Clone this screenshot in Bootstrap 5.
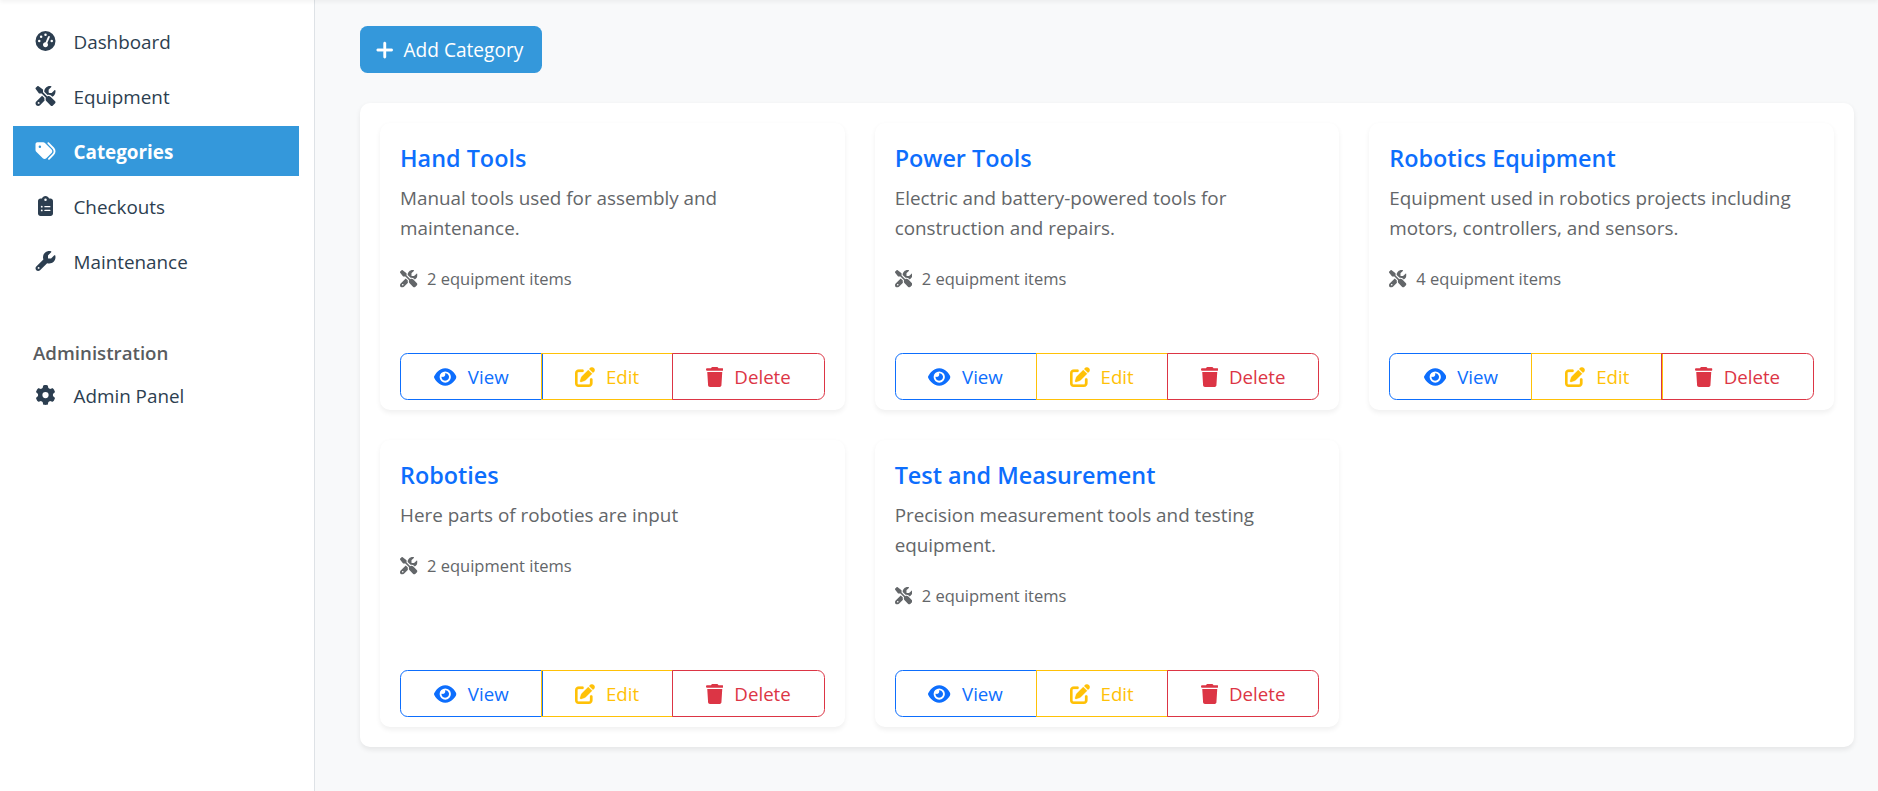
<!DOCTYPE html>
<html lang="en">
<head>
<meta charset="utf-8">
<meta name="viewport" content="width=device-width, initial-scale=1">
<title>Categories</title>
<link href="https://cdn.jsdelivr.net/npm/bootstrap@5.3.0/dist/css/bootstrap.min.css" rel="stylesheet">
<style>
  html { font-size: 20px; }
  body { font-family: "Open Sans", "Noto Sans", sans-serif; font-size: 18.85px; line-height: 30px; background: #f8f9fa; }
  .topline { position: fixed; inset: -10px 0 auto 0; height: 10px; box-shadow: 0 2px 4px rgba(0,0,0,.05); z-index: 5; }
  .ico { height: 20px; fill: currentColor; flex: none; }
  .side { width: 315px; min-height: 791px; border-right: 1px solid #dee2e6; padding: 16px 15px 0 13px; flex: none; }
  .side .nav-link { display: flex; align-items: center; height: 50px; padding: 1px 20px 0; margin-bottom: 5px; color: #2c3e50; }
  .side .nav-link .ico { width: 25px; margin: -1px 15.5px 0 0; }
  .side .nav-link.active { background: #3498db; color: #fff; font-weight: 700; }
  .side-head { margin: 47px 0 2px 20px; font-size: 18.7px; line-height: 30px; font-weight: 600; color: #595c5f; }
  .page { padding: 26px 24px 0 45px; }
  .btn { height: 47px; font-size: 18.7px; line-height: 30px; padding: 0 15px; border-radius: 7.5px; }
  .btn-add { width: 182px; background: #3498db; color: #fff; font-size: 19.1px; white-space: nowrap; }
  .btn-add .ico { margin-right: 10px; }
  .panel { margin-top: 30px; padding: 20px; border-radius: 10px; border: 0; box-shadow: 0 2.5px 5px rgba(0,0,0,.075); }
  .grid-row { --bs-gutter-x: 30px; --bs-gutter-y: 30px; }
  .cat { height: 287px; border: 0; border-radius: 10px; box-shadow: 0 2.5px 5px rgba(0,0,0,.06); }
  .cat .card-body { padding: 20px 20px 0; }
  .cat .card-title { font-size: 23.4px; line-height: 30px; font-weight: 600; margin-bottom: 10px; color: #0d6efd; }
  .cat .card-text { color: #636669; margin-bottom: 21px; }
  .cat .count { color: #636669; font-size: 16.5px; }
  .cat .count .ico { height: 17.5px; margin-right: 9.5px; }
  .acts { margin: 0 20px 10px; }
  .acts .btn { flex: 0 0 auto; display: flex; align-items: center; justify-content: center; background: transparent; padding: 0; }
  .acts .ico { margin-right: 11px; }
  .b-view { width: 142px; }
  .b-edit { width: 132px; }
  .b-del { flex: 1 1 0 !important; }
  .grid-row > :nth-child(3n+1) .b-view, .grid-row > :nth-child(3n) .b-view { width: 143px; }
  .grid-row > :nth-child(3n+1) .b-edit { margin-left: -2px !important; }
  .grid-row > :nth-child(3n) .b-del { margin-left: -2px !important; }
</style>
</head>
<body>
<svg class="d-none" xmlns="http://www.w3.org/2000/svg">
  <symbol id="gauge" viewBox="0 0 512 512"><path d="M0 256a256 256 0 1 1 512 0A256 256 0 1 1 0 256zM288 96a32 32 0 1 0 -64 0 32 32 0 1 0 64 0zM256 416c35.3 0 64-28.7 64-64c0-17.4-6.9-33.1-18.1-44.6L366 161.7c5.3-12.1-.2-26.3-12.3-31.6s-26.3 .2-31.6 12.3L257.9 288c-.6 0-1.3 0-1.9 0c-35.3 0-64 28.7-64 64s28.7 64 64 64zM176 144a32 32 0 1 0 -64 0 32 32 0 1 0 64 0zM96 288a32 32 0 1 0 0-64 32 32 0 1 0 0 64zm352-32a32 32 0 1 0 -64 0 32 32 0 1 0 64 0z"/></symbol>
  <symbol id="tools" viewBox="0 0 512 512"><path d="M78.6 5C69.1-2.4 55.6-1.5 47 7L7 47c-8.5 8.5-9.4 22-2.1 31.6l80 104c4.5 5.9 11.6 9.4 19 9.4h54.1l109 109c-14.7 29-10 65.4 14.3 89.6l112 112c12.5 12.5 32.8 12.5 45.3 0l64-64c12.5-12.5 12.5-32.8 0-45.3l-112-112c-24.2-24.2-60.6-29-89.6-14.3l-109-109V104c0-7.5-3.5-14.5-9.4-19L78.6 5zM19.9 396.1C7.2 408.8 0 426.1 0 444.1C0 481.6 30.4 512 67.9 512c18 0 35.3-7.2 48-19.9L233.7 374.3c-7.8-20.9-9-43.6-3.6-65.1l-61.7-61.7L19.9 396.1zM512 144c0-10.5-1.1-20.7-3.2-30.5c-2.4-11.2-16.1-14.1-24.2-6l-63.9 63.9c-3 3-7.1 4.7-11.3 4.7H352c-8.8 0-16-7.2-16-16V102.6c0-4.2 1.7-8.3 4.7-11.3l63.9-63.9c8.1-8.1 5.2-21.8-6-24.2C388.7 1.1 378.5 0 368 0C288.5 0 224 64.5 224 144l0 .8 85.3 85.3c36-9.1 75.8 .5 104 28.7L429 274.5c49-23 83-72.8 83-130.5zM56 432a24 24 0 1 1 48 0 24 24 0 1 1 -48 0z"/></symbol>
  <symbol id="tags" viewBox="0 0 512 512"><path d="M345 39.1L472.8 168.4c52.4 53 52.4 138.2 0 191.2L360.8 472.9c-9.3 9.4-24.5 9.5-33.9 .2s-9.5-24.5-.2-33.9L438.6 325.9c33.9-34.3 33.9-89.4 0-123.7L310.9 72.9c-9.3-9.4-9.2-24.6 .2-33.9s24.6-9.2 33.9 .2zM0 229.5V80C0 53.5 21.5 32 48 32H197.5c17 0 33.3 6.7 45.3 18.7l168 168c25 25 25 65.5 0 90.5L277.3 442.7c-25 25-65.5 25-90.5 0l-168-168C6.7 262.7 0 246.5 0 229.5zM144 144a32 32 0 1 0 -64 0 32 32 0 1 0 64 0z"/></symbol>
  <symbol id="clip" viewBox="0 0 384 512"><path d="M192 0c-41.8 0-77.4 26.7-90.5 64H64C28.7 64 0 92.7 0 128V448c0 35.3 28.7 64 64 64H320c35.3 0 64-28.7 64-64V128c0-35.3-28.7-64-64-64H282.5C269.4 26.7 233.8 0 192 0zm0 64a32 32 0 1 1 0 64 32 32 0 1 1 0-64zM72 272a24 24 0 1 1 48 0 24 24 0 1 1 -48 0zm104-16H304c8.8 0 16 7.2 16 16s-7.2 16-16 16H176c-8.8 0-16-7.2-16-16s7.2-16 16-16zM72 368a24 24 0 1 1 48 0 24 24 0 1 1 -48 0zm88 0c0-8.8 7.2-16 16-16H304c8.8 0 16 7.2 16 16s-7.2 16-16 16H176c-8.8 0-16-7.2-16-16z"/></symbol>
  <symbol id="wrench" viewBox="0 0 512 512"><path d="M352 320c88.4 0 160-71.6 160-160c0-15.3-2.2-30.1-6.2-44.2c-3.1-10.8-16.4-13.2-24.3-5.3l-76.8 76.8c-3 3-7.1 4.7-11.3 4.7H336c-8.8 0-16-7.2-16-16V118.6c0-4.2 1.7-8.3 4.7-11.3l76.8-76.8c7.9-7.9 5.4-21.2-5.3-24.3C382.1 2.2 367.3 0 352 0C263.6 0 192 71.6 192 160c0 19.1 3.4 37.5 9.5 54.5L19.9 396.1C7.2 408.8 0 426.1 0 444.1C0 481.6 30.4 512 67.9 512c18 0 35.3-7.2 48-19.9L297.5 310.5c17 6.2 35.4 9.5 54.5 9.5zM80 408a24 24 0 1 1 0 48 24 24 0 1 1 0-48z"/></symbol>
  <symbol id="gear" viewBox="0 0 512 512"><path d="M495.9 166.6c3.2 8.7 .5 18.4-6.4 24.6l-43.3 39.4c1.1 8.3 1.7 16.8 1.7 25.4s-.6 17.1-1.7 25.4l43.3 39.4c6.9 6.2 9.6 15.9 6.4 24.6c-4.4 11.9-9.7 23.3-15.8 34.3l-4.7 8.1c-6.6 11-14 21.4-22.1 31.2c-5.9 7.2-15.7 9.6-24.5 6.8l-55.7-17.7c-13.4 10.3-28.2 18.9-44 25.4l-12.5 57.1c-2 9.1-9 16.3-18.2 17.8c-13.8 2.3-28 3.5-42.5 3.5s-28.7-1.2-42.5-3.5c-9.2-1.5-16.2-8.7-18.2-17.8l-12.5-57.1c-15.8-6.5-30.6-15.1-44-25.4L83.1 425.9c-8.8 2.8-18.6 .3-24.5-6.8c-8.1-9.8-15.5-20.2-22.1-31.2l-4.7-8.1c-6.1-11-11.4-22.4-15.8-34.3c-3.2-8.7-.5-18.4 6.4-24.6l43.3-39.4C64.6 273.1 64 264.6 64 256s.6-17.1 1.7-25.4L22.4 191.2c-6.9-6.2-9.6-15.9-6.4-24.6c4.4-11.9 9.7-23.3 15.8-34.3l4.7-8.1c6.6-11 14-21.4 22.1-31.2c5.9-7.2 15.7-9.6 24.5-6.8l55.7 17.7c13.4-10.3 28.2-18.9 44-25.4l12.5-57.1c2-9.1 9-16.3 18.2-17.8C227.3 1.2 241.5 0 256 0s28.7 1.2 42.5 3.5c9.2 1.5 16.2 8.7 18.2 17.8l12.5 57.1c15.8 6.5 30.6 15.1 44 25.4l55.7-17.7c8.8-2.8 18.6-.3 24.5 6.8c8.1 9.8 15.5 20.2 22.1 31.2l4.7 8.1c6.1 11 11.4 22.4 15.8 34.3zM256 336a80 80 0 1 0 0-160 80 80 0 1 0 0 160z"/></symbol>
  <symbol id="plus" viewBox="0 0 448 512"><path d="M256 80c0-17.7-14.3-32-32-32s-32 14.3-32 32V224H48c-17.7 0-32 14.3-32 32s14.3 32 32 32H192V432c0 17.7 14.3 32 32 32s32-14.3 32-32V288H400c17.7 0 32-14.3 32-32s-14.3-32-32-32H256V80z" stroke="currentColor" stroke-width="10"/></symbol>
  <symbol id="eye" viewBox="0 0 576 512"><path d="M288 32c-80.8 0-145.5 36.8-192.6 80.6C48.6 156 17.3 208 2.5 243.7c-3.3 7.9-3.3 16.7 0 24.6C17.3 304 48.6 356 95.4 399.4C142.5 443.2 207.2 480 288 480s145.5-36.8 192.6-80.6c46.8-43.5 78.1-95.4 93-131.1c3.3-7.9 3.3-16.7 0-24.6c-14.9-35.7-46.2-87.7-93-131.1C433.5 68.8 368.8 32 288 32zM144 256a144 144 0 1 1 288 0 144 144 0 1 1 -288 0zm144-64c0 35.3-28.7 64-64 64c-7.1 0-13.9-1.2-20.3-3.3c-5.5-1.8-11.9 1.6-11.7 7.4c.3 6.9 1.3 13.8 3.2 20.7c13.7 51.2 66.4 81.6 117.6 67.9s81.6-66.4 67.9-117.6c-11.1-41.5-47.8-69.4-88.6-71.1c-5.8-.2-9.2 6.1-7.4 11.7c2.1 6.4 3.3 13.2 3.3 20.3z"/></symbol>
  <symbol id="edit" viewBox="0 0 512 512"><path d="M471.6 21.7c-21.9-21.9-57.3-21.9-79.2 0L362.3 51.7l97.9 97.9 30.1-30.1c21.9-21.9 21.9-57.3 0-79.2L471.6 21.7zm-299.2 220c-6.1 6.1-10.8 13.6-13.5 21.9l-29.6 88.8c-2.9 8.6-.6 18.1 5.8 24.6s15.9 8.7 24.6 5.8l88.8-29.6c8.2-2.7 15.7-7.4 21.9-13.5L437.7 172.3 339.7 74.3 172.4 241.7zM96 64C43 64 0 107 0 160V416c0 53 43 96 96 96H352c53 0 96-43 96-96V320c0-17.7-14.3-32-32-32s-32 14.3-32 32v96c0 17.7-14.3 32-32 32H96c-17.7 0-32-14.3-32-32V160c0-17.7 14.3-32 32-32h96c17.7 0 32-14.3 32-32s-14.3-32-32-32H96z" stroke="currentColor" stroke-width="6"/></symbol>
  <symbol id="trash" viewBox="0 0 448 512"><path d="M135.2 17.7L128 32H32C14.3 32 0 46.3 0 64S14.3 96 32 96H416c17.7 0 32-14.3 32-32s-14.3-32-32-32H320l-7.2-14.3C307.4 6.8 296.3 0 284.2 0H163.8c-12.1 0-23.2 6.8-28.6 17.7zM416 128H32L53.2 467c1.6 25.3 22.6 45 47.9 45H346.9c25.3 0 46.3-19.7 47.9-45L416 128z"/></symbol>
</svg>
<div class="topline"></div>
<div class="d-flex">
  <nav class="side bg-white">
    <div class="nav flex-column">
      <a class="nav-link" href="#"><svg class="ico"><use href="#gauge"/></svg>Dashboard</a>
      <a class="nav-link" href="#"><svg class="ico"><use href="#tools"/></svg>Equipment</a>
      <a class="nav-link active" href="#"><svg class="ico"><use href="#tags"/></svg>Categories</a>
      <a class="nav-link" href="#"><svg class="ico"><use href="#clip"/></svg>Checkouts</a>
      <a class="nav-link" href="#"><svg class="ico"><use href="#wrench"/></svg>Maintenance</a>
      <h6 class="side-head">Administration</h6>
      <a class="nav-link" href="#"><svg class="ico"><use href="#gear"/></svg>Admin Panel</a>
    </div>
  </nav>
  <main class="page flex-grow-1">
    <a class="btn btn-add d-flex align-items-center" href="#"><svg class="ico" width="17.5"><use href="#plus"/></svg>Add Category</a>
    <div class="card panel">
      <div class="row row-cols-3 grid-row" id="cats"></div>
    </div>
  </main>
</div>
<script src="https://cdn.jsdelivr.net/npm/bootstrap@5.3.0/dist/js/bootstrap.bundle.min.js"></script>
<script>
  const cats = [
    ["Hand Tools", "Manual tools used for assembly and<br>maintenance.", 2],
    ["Power Tools", "Electric and battery-powered tools for<br>construction and repairs.", 2],
    ["Robotics Equipment", "Equipment used in robotics projects including<br>motors, controllers, and sensors.", 4],
    ["Roboties", "Here parts of roboties are input", 2],
    ["Test and Measurement", "Precision measurement tools and testing<br>equipment.", 2]
  ];
  document.getElementById("cats").innerHTML = cats.map(([name, text, n]) => `
    <div class="col"><div class="card cat">
      <div class="card-body">
        <h5 class="card-title">${name}</h5>
        <p class="card-text text-nowrap">${text}</p>
        <div class="count d-flex align-items-center"><svg class="ico" width="17.5"><use href="#tools"/></svg>${n} equipment items</div>
      </div>
      <div class="btn-group acts">
        <a class="btn btn-outline-primary b-view" href="#"><svg class="ico" width="22.5"><use href="#eye"/></svg>View</a>
        <a class="btn btn-outline-warning b-edit" href="#"><svg class="ico" width="20"><use href="#edit"/></svg>Edit</a>
        <a class="btn btn-outline-danger b-del" href="#"><svg class="ico" width="17.5"><use href="#trash"/></svg>Delete</a>
      </div>
    </div></div>`).join("");
</script>
</body>
</html>
